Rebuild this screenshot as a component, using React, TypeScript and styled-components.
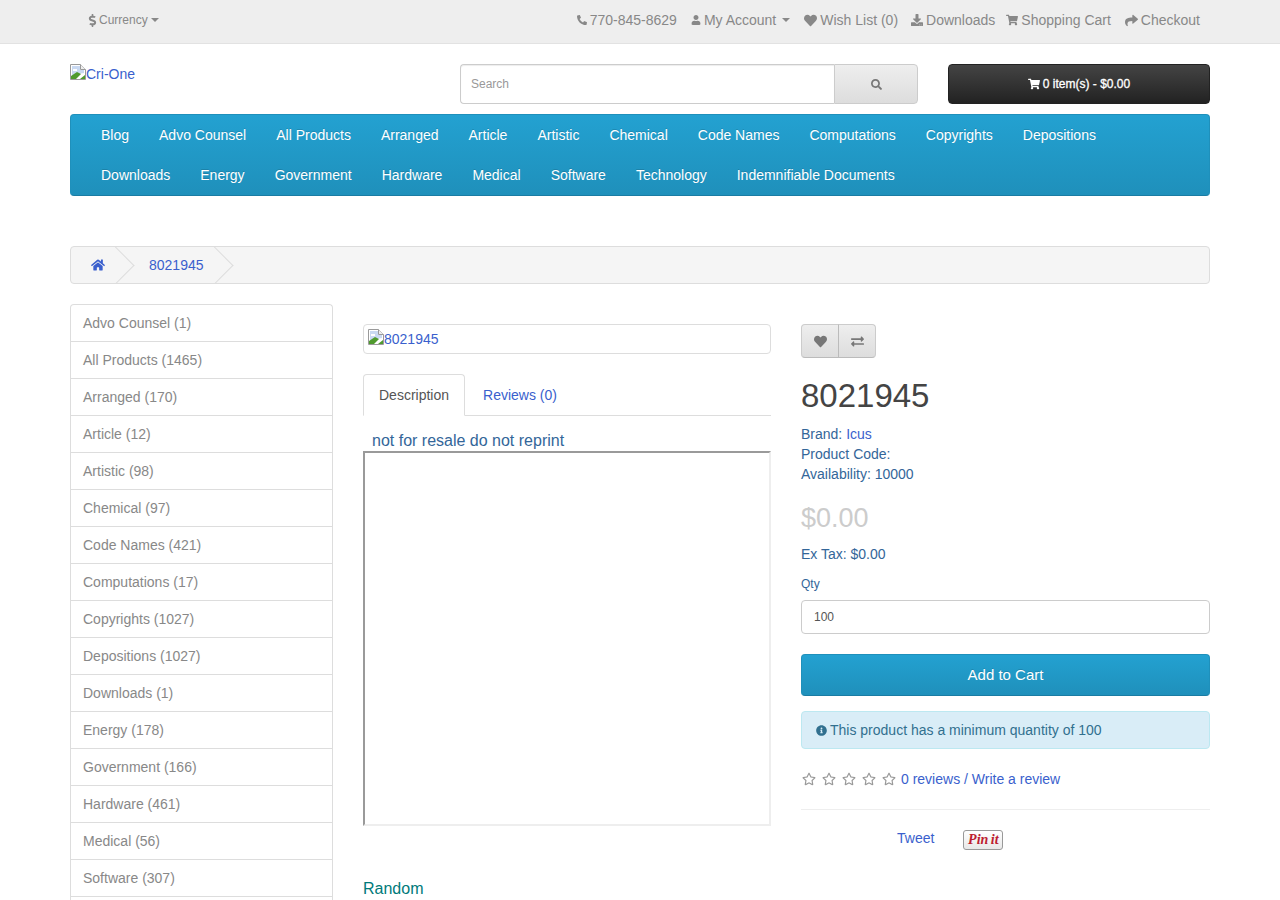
import React from 'react';
import styled, { createGlobalStyle } from 'styled-components';
import { FaPhoneAlt, FaUser, FaHeart, FaDownload, FaShoppingCart, FaShare, FaDollarSign, FaSearch, FaHome, FaExchangeAlt, FaInfoCircle, FaRegStar } from 'react-icons/fa';

const Global = createGlobalStyle`
  html, body { margin: 0; padding: 0; height: 900px; overflow: hidden; background: #fff; }
  body { font-family: "Liberation Sans", Arial, sans-serif; font-size: 14px; line-height: 20px; color: #336699; }
  * { box-sizing: border-box; }
`;

const TopBar = styled.div`
  height: 44px;
  background: #eee;
  border-bottom: 1px solid #e2e2e2;
`;
const Container = styled.div`
  width: 1140px;
  margin: 0 auto;
`;
const TopInner = styled(Container)`
  height: 43px;
  display: flex;
  align-items: center;
  justify-content: space-between;
  padding: 0 10px 3px 16px;
  color: #888;
`;
const CurrencyBox = styled.div`
  display: flex;
  align-items: center;
  font-size: 12px;
  svg { font-size: 13px; }
`;
const TopLinks = styled.div`
  display: flex;
  align-items: center;
`;
const TopLink = styled.span<{ $gap: number; $icon: number }>`
  display: flex;
  align-items: center;
  gap: 3px;
  margin-left: ${p => p.$gap}px;
  svg { font-size: ${p => p.$icon}px; }
`;
const Caret = styled.i`
  display: inline-block;
  width: 0;
  height: 0;
  margin-left: 3px;
  border-top: 4px solid #888;
  border-left: 4px solid transparent;
  border-right: 4px solid transparent;
`;

const HeaderRow = styled(Container)`
  display: grid;
  grid-template-columns: 390px 458px 262px;
  column-gap: 0;
  height: 70px;
  padding-top: 20px;
`;
const LogoLink = styled.a`
  display: flex;
  align-items: flex-start;
  color: #3A5FCD;
  font-size: 14px;
  line-height: 20px;
`;
const Broken = styled.svg`
  flex: none;
  width: 16px;
  height: 16px;
`;
const SearchGroup = styled.div`
  display: flex;
  height: 40px;
  width: 458px;
`;
const SearchInput = styled.div`
  flex: 1;
  border: 1px solid #ccc;
  border-right: 0;
  border-radius: 4px 0 0 4px;
  box-shadow: inset 0 1px 1px rgba(0,0,0,.075);
  padding: 0 10px;
  font-size: 12px;
  line-height: 38px;
  color: #999;
`;
const SearchButton = styled.div`
  width: 84px;
  display: flex;
  align-items: center;
  justify-content: center;
  border: 1px solid #ccc;
  border-radius: 0 4px 4px 0;
  background: linear-gradient(#eee, #ddd);
  color: #777;
  font-size: 11px;
`;
const CartButton = styled.div`
  margin-left: 30px;
  width: 262px;
  height: 40px;
  display: flex;
  align-items: center;
  justify-content: center;
  gap: 3px;
  background: linear-gradient(#444, #222);
  border: 1px solid #222;
  border-radius: 4px;
  color: #fff;
  font-size: 12px;
  font-weight: 400;
  -webkit-text-stroke: 0.3px #fff;
`;

const Nav = styled(Container)`
  background: linear-gradient(#23a1d1, #1f90bb);
  border: 1px solid #1f90bb;
  border-bottom-color: #1a7ca3;
  border-radius: 4px;
  padding: 0 0 0 15px;
  height: 82px;
  display: flex;
  flex-wrap: wrap;
  align-content: flex-start;
`;
const NavItem = styled.a`
  display: block;
  padding: 10px 15px;
  height: 40px;
  color: #fff;
  font-size: 14px;
  text-shadow: 0 -1px 0 rgba(0,0,0,.15);
`;
const NavBreak = styled.div`
  flex-basis: 100%;
  height: 0;
`;

const Breadcrumb = styled(Container)`
  margin-top: 50px;
  height: 38px;
  display: flex;
  align-items: stretch;
  background: #f5f5f5;
  border: 1px solid #ddd;
  border-radius: 4px;
  overflow: hidden;
  color: #3A5FCD;
`;
const Crumb = styled.a<{ $width: number; $pad: number }>`
  position: relative;
  width: ${p => p.$width}px;
  padding-left: ${p => p.$pad}px;
  display: flex;
  align-items: center;
  &::after {
    content: '';
    position: absolute;
    right: 4px;
    top: 0;
    width: 26px;
    height: 26px;
    margin-top: 5px;
    border-top: 1px solid #ddd;
    border-right: 1px solid #ddd;
    transform: rotate(45deg);
  }
`;

const Columns = styled(Container)`
  margin-top: 20px;
  display: grid;
  grid-template-columns: 263px 408px 409px;
  column-gap: 30px;
  align-items: start;
`;
const CatList = styled.div`
  border: 1px solid #ddd;
  border-bottom: 0;
  border-radius: 4px 4px 0 0;
  padding-bottom: 12px;
`;
const CatItem = styled.a`
  display: block;
  height: 37px;
  padding: 8px 12px;
  color: #888;
  border-bottom: 1px solid #ddd;
`;

const Mid = styled.div`
  padding-top: 20px;
`;
const Thumb = styled.a`
  display: flex;
  height: 30px;
  padding: 4px;
  align-items: flex-start;
  border: 1px solid #ddd;
  border-radius: 4px;
  color: #3A5FCD;
`;
const Tabs = styled.div`
  margin-top: 20px;
  height: 42px;
  display: flex;
  border-bottom: 1px solid #ddd;
`;
const Tab = styled.a<{ $active?: boolean }>`
  height: 42px;
  padding: 10px 15px;
  margin-right: 2px;
  border: 1px solid ${p => (p.$active ? '#ddd' : 'transparent')};
  border-bottom-color: ${p => (p.$active ? '#fff' : 'transparent')};
  border-radius: 4px 4px 0 0;
  background: ${p => (p.$active ? '#fff' : 'transparent')};
  color: ${p => (p.$active ? '#555' : '#3A5FCD')};
`;
const DescText = styled.div`
  margin-top: 14px;
  padding-left: 9px;
  font-size: 16px;
  line-height: 21px;
`;
const FrameBox = styled.div`
  height: 375px;
  border: 2px solid;
  border-color: #9a9a9a #eee #eee #9a9a9a;
`;
const RandomTitle = styled.div`
  margin-top: 53px;
  font-size: 16px;
  line-height: 20px;
  color: #007a7a;
`;

const Right = styled.div`
  padding-top: 20px;
`;
const BtnGroup = styled.div`
  display: inline-flex;
  height: 34px;
`;
const IconBtn = styled.div<{ $pos: 'l' | 'r' }>`
  width: 38px;
  display: flex;
  align-items: center;
  justify-content: center;
  background: linear-gradient(#eee, #ddd);
  border: 1px solid #ccc;
  border-left-color: ${p => (p.$pos === 'l' ? '#ccc' : '#bbb')};
  ${p => p.$pos === 'r' && 'margin-left: -1px;'}
  border-bottom-color: #bbb;
  border-radius: ${p => (p.$pos === 'l' ? '4px 0 0 4px' : '0 4px 4px 0')};
  color: #777;
  font-size: 13px;
`;
const Title = styled.h1`
  margin: 20px 0 10px;
  font-size: 33px;
  font-weight: 400;
  line-height: 36px;
  color: #444;
`;
const InfoList = styled.div`
  margin-top: 10px;
`;
const InfoLine = styled.div`
  height: 20px;
`;
const Link = styled.a`
  color: #3A5FCD;
`;
const Price = styled.div`
  margin-top: 18px;
  font-size: 27px;
  line-height: 33px;
  color: #ccc;
`;
const ExTax = styled.div`
  margin-top: 9px;
`;
const QtyLabel = styled.div`
  margin-top: 10px;
  font-size: 12px;
  line-height: 20px;
`;
const QtyInput = styled.div`
  margin-top: 6px;
  height: 34px;
  border: 1px solid #ccc;
  border-radius: 4px;
  padding: 0 12px;
  font-size: 12px;
  line-height: 32px;
  color: #555;
`;
const AddButton = styled.div`
  margin-top: 20px;
  height: 42px;
  background: linear-gradient(#23a1d1, #1f90bb);
  border: 1px solid #1f90bb;
  border-bottom-color: #1a7ca3;
  border-radius: 4px;
  color: #fff;
  font-size: 15px;
  line-height: 40px;
  text-align: center;
  text-shadow: 0 -1px 0 rgba(0,0,0,.15);
`;
const Alert = styled.div`
  margin-top: 15px;
  height: 38px;
  padding: 8px 14px;
  display: flex;
  align-items: center;
  gap: 3px;
  background: #d9edf7;
  border: 1px solid #bce8f1;
  border-radius: 4px;
  color: #31708f;
  svg { font-size: 11px; }
`;
const Rating = styled.div`
  margin-top: 20px;
  display: flex;
  align-items: center;
  color: #999;
  height: 20px;
`;
const Star = styled.span`
  width: 20px;
  display: flex;
  font-size: 14px;
  margin-left: 1px;
  margin-right: -1px;
`;
const Rule = styled.div`
  margin-top: 20px;
  border-top: 1px solid #eee;
`;
const Share = styled.div`
  margin-top: 18px;
  padding-left: 96px;
  display: flex;
  align-items: flex-start;
  gap: 29px;
`;
const PinIt = styled.span`
  margin-top: 2px;
  width: 40px;
  height: 20px;
  display: flex;
  align-items: center;
  justify-content: center;
  border: 1px solid #999;
  border-radius: 3px;
  background: linear-gradient(#fff, #e8e8e8);
  color: #bd2030;
  font-family: "Liberation Serif", serif;
  font-style: italic;
  font-weight: 700;
  font-size: 14px;
  word-spacing: -1px;
`;

const BrokenImg = () => (
  <Broken viewBox="0 0 16 16">
    <path d="M.5.5h10l5 5v10H.5z" fill="#fff" stroke="#9a9a9a" />
    <path d="M2 2h8v4h4v3L8 10 2 13z" fill="#c9d9f2" />
    <path d="M3 5h4v2H3z" fill="#fff" />
    <path d="M10.5.5v5h5" fill="#eee" stroke="#9a9a9a" />
    <path d="M1 15v-3l6-4 4 2-5 5z" fill="#4f9a2e" />
    <path d="M10 15l5-4v4z" fill="#4f9a2e" />
  </Broken>
);

const row1 = ['Blog', 'Advo Counsel', 'All Products', 'Arranged', 'Article', 'Artistic', 'Chemical', 'Code Names', 'Computations', 'Copyrights', 'Depositions'];
const row2 = ['Downloads', 'Energy', 'Government', 'Hardware', 'Medical', 'Software', 'Technology', 'Indemnifiable Documents'];
const cats = ['Advo Counsel (1)', 'All Products (1465)', 'Arranged (170)', 'Article (12)', 'Artistic (98)', 'Chemical (97)', 'Code Names (421)', 'Computations (17)', 'Copyrights (1027)', 'Depositions (1027)', 'Downloads (1)', 'Energy (178)', 'Government (166)', 'Hardware (461)', 'Medical (56)', 'Software (307)'];

export default function App() {
  return (
    <>
      <Global />
      <TopBar>
        <TopInner>
          <CurrencyBox><FaDollarSign />Currency<Caret /></CurrencyBox>
          <TopLinks>
            <TopLink $gap={0} $icon={10}><FaPhoneAlt />770-845-8629</TopLink>
            <TopLink $gap={14} $icon={10}><FaUser />My Account <Caret /></TopLink>
            <TopLink $gap={14} $icon={13}><FaHeart />Wish List (0)</TopLink>
            <TopLink $gap={13} $icon={12}><FaDownload />Downloads</TopLink>
            <TopLink $gap={11} $icon={12}><FaShoppingCart />Shopping Cart</TopLink>
            <TopLink $gap={14} $icon={13}><FaShare />Checkout</TopLink>
          </TopLinks>
        </TopInner>
      </TopBar>
      <HeaderRow>
        <LogoLink><BrokenImg />Cri-One</LogoLink>
        <SearchGroup>
          <SearchInput>Search</SearchInput>
          <SearchButton><FaSearch /></SearchButton>
        </SearchGroup>
        <CartButton><FaShoppingCart />0 item(s) - $0.00</CartButton>
      </HeaderRow>
      <Nav>
        {row1.map(n => <NavItem key={n}>{n}</NavItem>)}
        <NavBreak />
        {row2.map(n => <NavItem key={n}>{n}</NavItem>)}
      </Nav>
      <Breadcrumb>
        <Crumb $width={62} $pad={20}><FaHome /></Crumb>
        <Crumb $width={99} $pad={16}>8021945</Crumb>
      </Breadcrumb>
      <Columns>
        <CatList>
          {cats.map(c => <CatItem key={c}>{c}</CatItem>)}
        </CatList>
        <Mid>
          <Thumb><BrokenImg />8021945</Thumb>
          <Tabs>
            <Tab $active>Description</Tab>
            <Tab>Reviews (0)</Tab>
          </Tabs>
          <DescText>not for resale do not reprint</DescText>
          <FrameBox />
          <RandomTitle>Random</RandomTitle>
        </Mid>
        <Right>
          <BtnGroup>
            <IconBtn $pos="l"><FaHeart /></IconBtn>
            <IconBtn $pos="r"><FaExchangeAlt /></IconBtn>
          </BtnGroup>
          <Title>8021945</Title>
          <InfoList>
            <InfoLine>Brand: <Link>Icus</Link></InfoLine>
            <InfoLine>Product Code:</InfoLine>
            <InfoLine>Availability: 10000</InfoLine>
          </InfoList>
          <Price>$0.00</Price>
          <ExTax>Ex Tax: $0.00</ExTax>
          <QtyLabel>Qty</QtyLabel>
          <QtyInput>100</QtyInput>
          <AddButton>Add to Cart</AddButton>
          <Alert><FaInfoCircle />This product has a minimum quantity of 100</Alert>
          <Rating>
            {[0, 1, 2, 3, 4].map(i => <Star key={i}><FaRegStar /></Star>)}
            <Link>0 reviews / Write a review</Link>
          </Rating>
          <Rule />
          <Share>
            <Link>Tweet</Link>
            <PinIt>Pin it</PinIt>
          </Share>
        </Right>
      </Columns>
    </>
  );
}
